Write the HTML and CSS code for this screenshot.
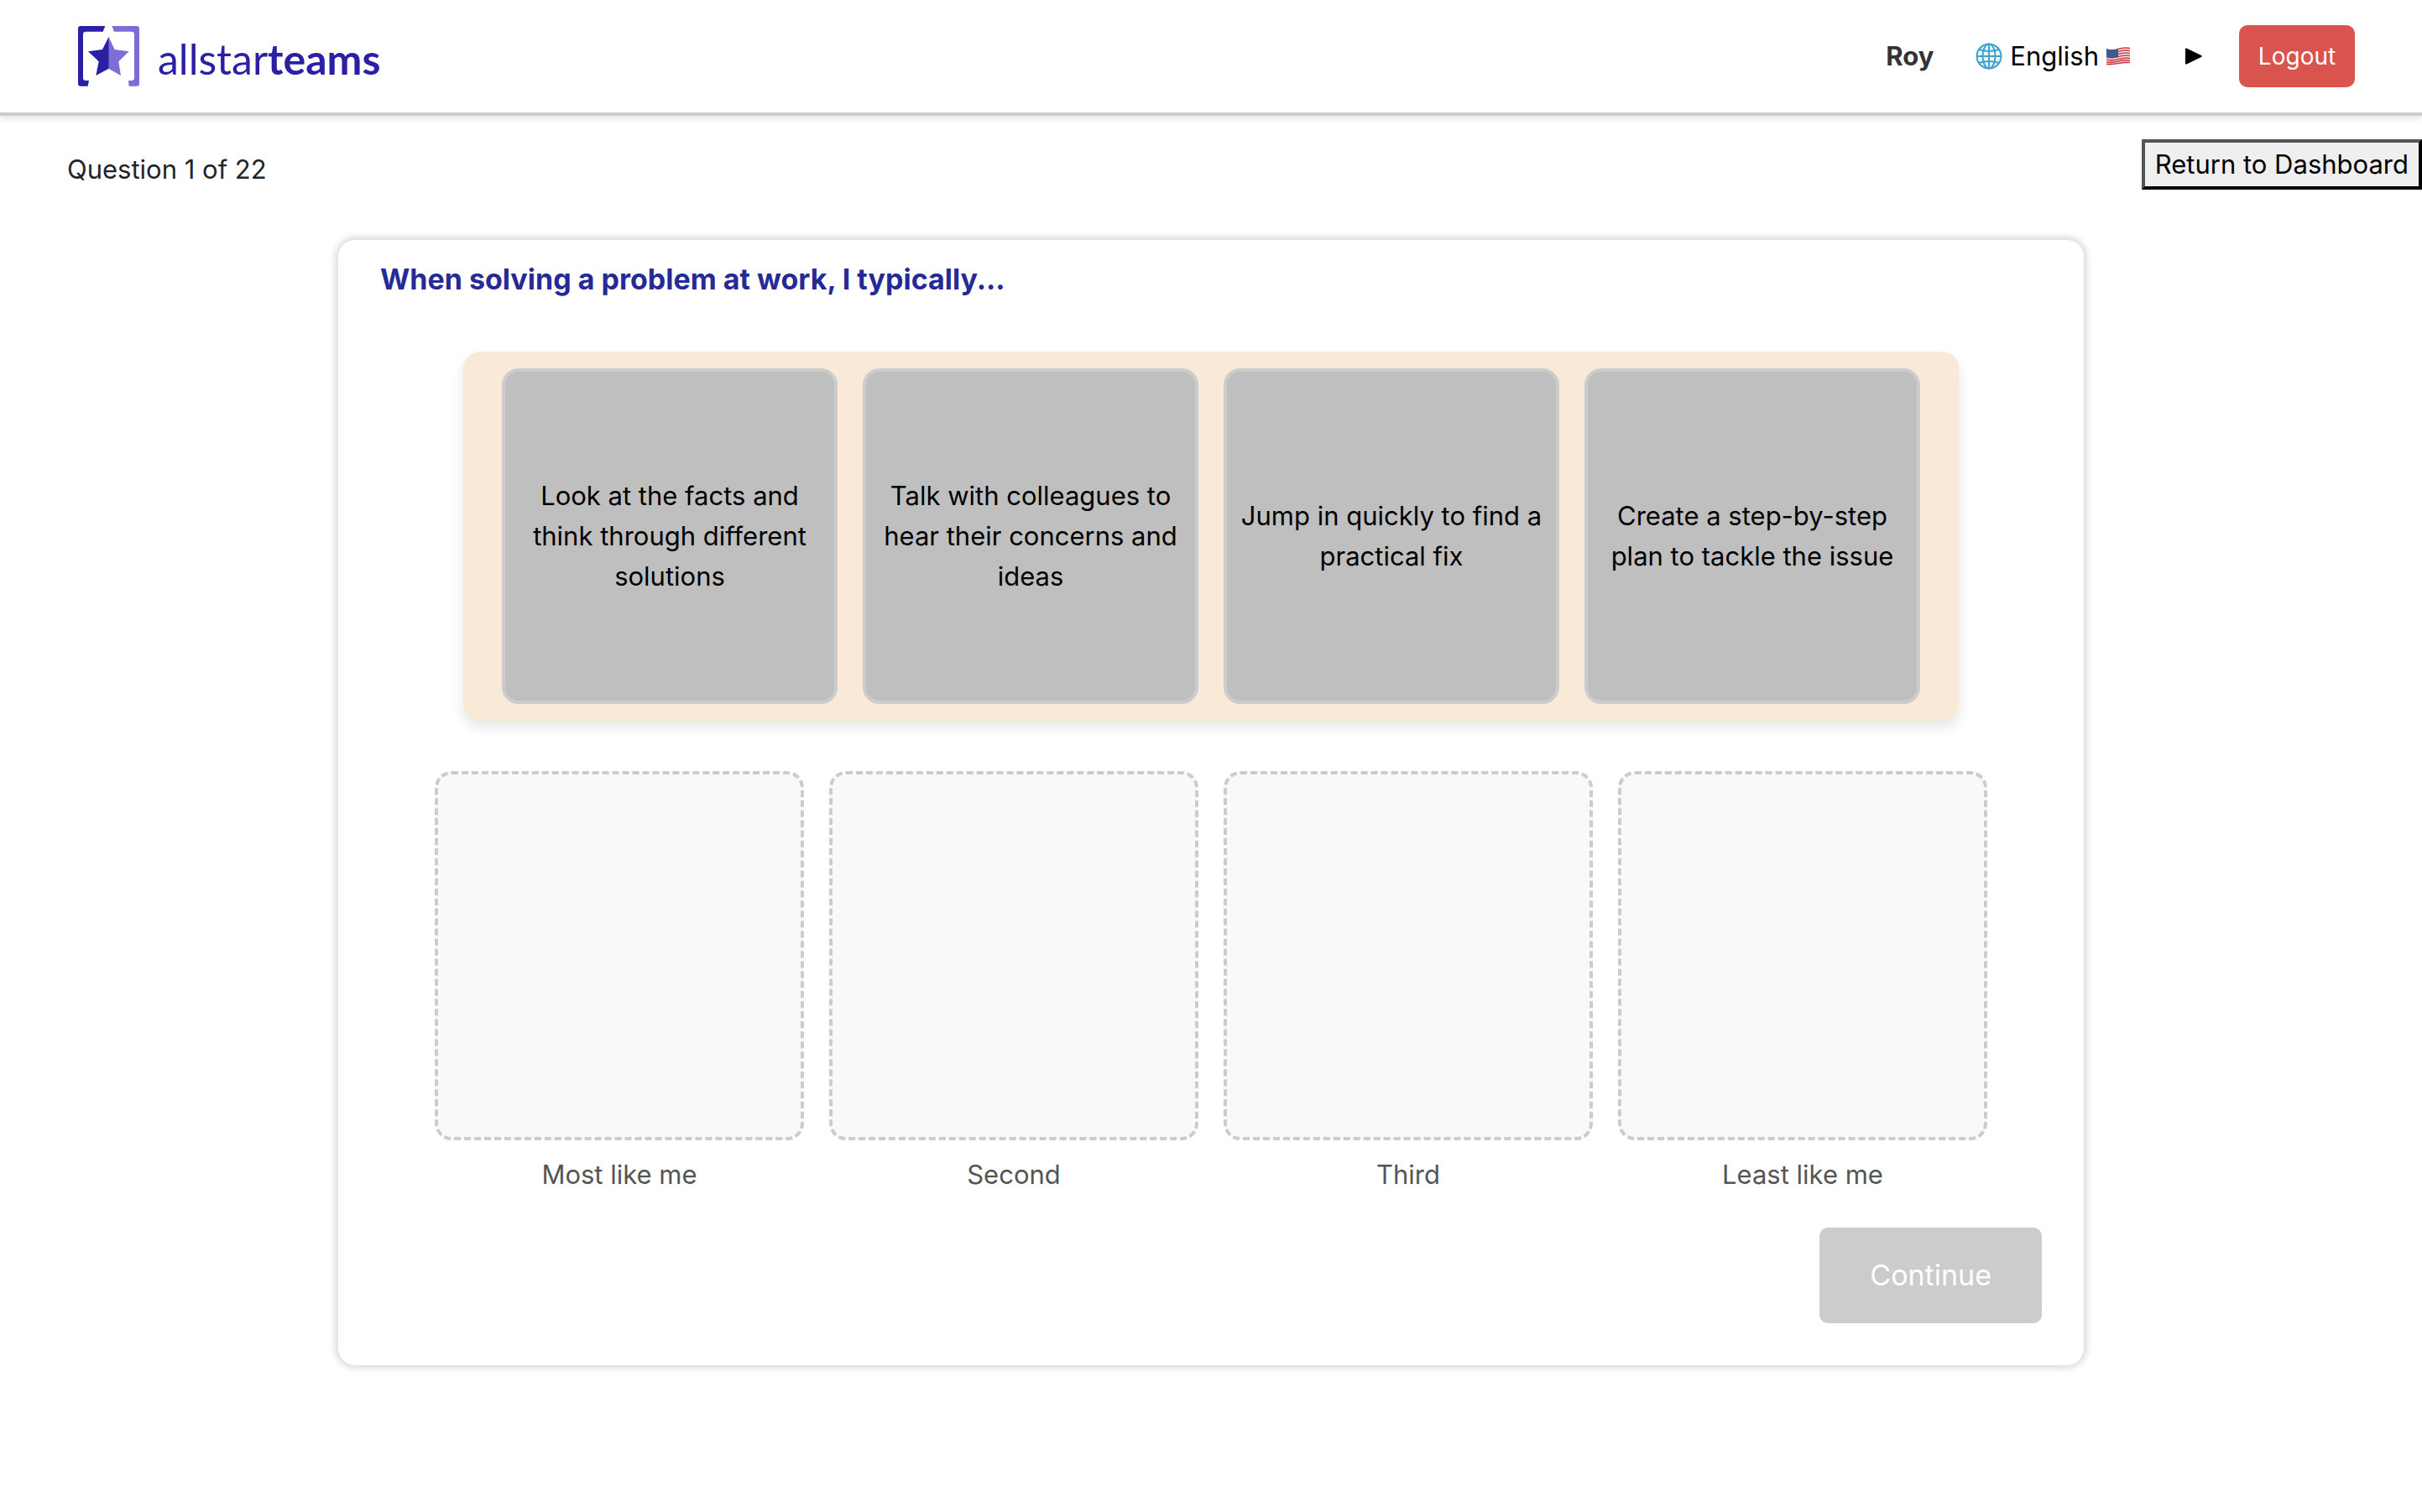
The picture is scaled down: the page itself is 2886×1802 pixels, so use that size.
FILE: index.html
```html
<!DOCTYPE html>
<html lang="en">
<head>
<meta charset="utf-8">
<meta name="viewport" content="width=device-width, initial-scale=1">
<title>AllStarTeams – Assessment</title>
<link rel="stylesheet" href="styles.css">
</head>
<body>
<header class="header">
  <a class="logo" href="#" aria-label="allstarteams">
    <svg class="logo-mark" viewBox="99 63 219 216" aria-hidden="true">
      <path fill="#2a1fa5" d="M196 63H108Q99 63 99 72V269Q99 278 108 278H134L138 258H126Q117 258 117 249V93Q117 83 127 83H188Z"/>
      <path fill="#7e6dd6" d="M220 63H309Q318 63 318 72V269Q318 278 309 278H281L279 258H290Q300 258 300 249V93Q300 83 290 83H228Z"/>
      <path fill="#7e6dd6" d="M208 101L230 147L281 154L244 190L252 240L208 215Z"/>
      <path fill="#2a1fa5" d="M209 101L186 147L135 154L173 190L163 240L209 215Z"/>
    </svg>
    <span class="logo-text">allstar<b>teams</b></span>
  </a>
  <nav class="nav">
    <span class="user">Roy</span>
    <button class="language" type="button">
      <svg class="globe" viewBox="0 0 32 32" fill="none" stroke="#3fa3cb" stroke-width="2" aria-hidden="true">
        <circle cx="16" cy="16" r="14.500" fill="#eaf6fb"/>
        <ellipse cx="16" cy="16" rx="7.500" ry="14.500"/>
        <path d="M16 1V31M1 16H31M4 8Q16 12 28 8M4 24Q16 20 28 24"/>
      </svg>
      English
      <svg class="flag" viewBox="0 0 28 22" aria-hidden="true">
        <path fill="#f3eef0" d="M0 2Q7 5 14 2T28 1V19Q21 18 14 20T0 21Z"/>
        <path fill="none" stroke="#cf3b45" stroke-width="1.600" d="M0 3Q7 5 14 2.500T28 1.500M0 6Q7 8 14 5.500T28 4.500M0 9Q7 11 14 8.500T28 7.500M0 12Q7 14 14 11.500T28 10.500M0 15Q7 17 14 14.500T28 13.500M0 18Q7 19 14 17T28 16M0 20.500Q7 21 14 19.500T28 18.500"/>
        <path fill="#3c5a92" d="M0 2Q7 5 14 2V12Q7 14 0 12Z"/>
      </svg>
    </button>
    <button class="play" type="button" aria-label="Play">
      <svg class="play-icon" viewBox="0 0 20 20" aria-hidden="true"><path d="M0 1.500Q0 0 1.500 .5L19 9Q20.500 10 19 11L1.500 19.500Q0 20 0 18.500Z"/></svg>
    </button>
    <button class="logout" type="button">Logout</button>
  </nav>
</header>

<main class="page">
  <div class="toolbar">
    <p class="progress">Question 1 of 22</p>
    <button class="dashboard" type="button">Return to Dashboard</button>
  </div>

  <section class="card">
    <h1 class="question">When solving a problem at work, I typically...</h1>
    <div class="options">
      <div class="option" draggable="true">Look at the facts and think through different solutions</div>
      <div class="option" draggable="true">Talk with colleagues to hear their concerns and ideas</div>
      <div class="option" draggable="true">Jump in quickly to find a practical fix</div>
      <div class="option" draggable="true">Create a step-by-step plan to tackle the issue</div>
    </div>
    <div class="ranks">
      <div class="rank"><div class="slot"></div><p class="rank-label">Most like me</p></div>
      <div class="rank"><div class="slot"></div><p class="rank-label">Second</p></div>
      <div class="rank"><div class="slot"></div><p class="rank-label">Third</p></div>
      <div class="rank"><div class="slot"></div><p class="rank-label">Least like me</p></div>
    </div>
    <div class="actions">
      <button class="continue" type="button" disabled>Continue</button>
    </div>
  </section>
</main>
</body>
</html>
```

FILE: styles.css
```css
* {
  box-sizing: border-box;
}

body {
  margin: 0;
  background: #fff;
  color: #212529;
  font: 31px/48px Inter, "Liberation Sans", sans-serif;
}

h1,
p {
  margin: 0;
}

button {
  font: inherit;
}

.header {
  display: flex;
  align-items: center;
  justify-content: space-between;
  min-height: 138px;
  padding: 0 80px 0 93px;
  border-bottom: 4px solid #ccc;
  box-shadow: 0 4px 8px rgba(0, 0, 0, 0.1);
}

.logo {
  display: flex;
  align-items: center;
  gap: 22px;
  color: #2a1fa5;
  text-decoration: none;
}

.logo-mark {
  width: 73px;
  height: 72px;
}

.logo-text {
  padding-top: 6px;
  font-family: Lato, sans-serif;
  font-size: 50px;
  line-height: 60px;
}

.nav {
  display: flex;
  align-items: center;
}

.user {
  margin-right: 50px;
  color: #333;
  font-weight: 700;
}

.language,
.play {
  display: flex;
  align-items: center;
  padding: 0;
  border: 0;
  background: none;
  color: #000;
}

.language {
  gap: 9px;
  margin-right: 66px;
}

.globe {
  width: 32px;
  height: 32px;
}

.flag {
  width: 28px;
  height: 22px;
}

.play {
  margin-right: 44px;
}

.play-icon {
  width: 20px;
  height: 20px;
}

.logout {
  width: 138px;
  height: 74px;
  padding: 0;
  border: 0;
  border-radius: 10px;
  background: #d9534f;
  color: #fff;
  font-size: 28px;
}

.page {
  padding-bottom: 80px;
}

.toolbar {
  display: flex;
  align-items: flex-start;
  justify-content: space-between;
  padding: 28px 0 60px 80px;
}

.progress {
  padding-top: 12px;
}

.dashboard {
  height: 60px;
  padding: 0 12px;
  border: 4px outset #000;
  background: #efefef;
  color: #000;
}

.card {
  max-width: 2080px;
  margin: 0 auto;
  padding: 22px 50px 50px;
  border-radius: 20px;
  background: #fff;
  box-shadow: 0 0 8px 3px rgba(0, 0, 0, 0.16);
}

.question {
  color: #262a96;
  font-size: 34px;
  line-height: 50px;
  font-weight: 700;
}

.options {
  display: grid;
  grid-template-columns: repeat(4, 1fr);
  gap: 30px;
  max-width: 1782px;
  margin: 61px auto 60px;
  padding: 20px 46px;
  border-radius: 20px;
  background: #f9ead7;
  box-shadow: 0 8px 16px rgba(0, 0, 0, 0.1);
}

.option {
  display: flex;
  align-items: center;
  justify-content: center;
  aspect-ratio: 1;
  padding: 16px;
  border: 4px solid #ccc;
  border-radius: 20px;
  background: #bfbfbf;
  color: #000;
  text-align: center;
  cursor: grab;
}

.ranks {
  display: grid;
  grid-template-columns: repeat(4, 1fr);
  gap: 30px;
  max-width: 1850px;
  margin: 0 auto;
}

.slot {
  aspect-ratio: 1;
  border: 4px dashed #ccc;
  border-radius: 20px;
  background: #f9f9f9;
}

.rank-label {
  padding-top: 17px;
  color: #555;
  text-align: center;
}

.actions {
  display: flex;
  justify-content: flex-end;
  padding-top: 39px;
}

.continue {
  padding: 32px 60px;
  border: 0;
  border-radius: 10px;
  background: #ccc;
  color: #fff;
  font-size: 34px;
  line-height: 50px;
}
```
